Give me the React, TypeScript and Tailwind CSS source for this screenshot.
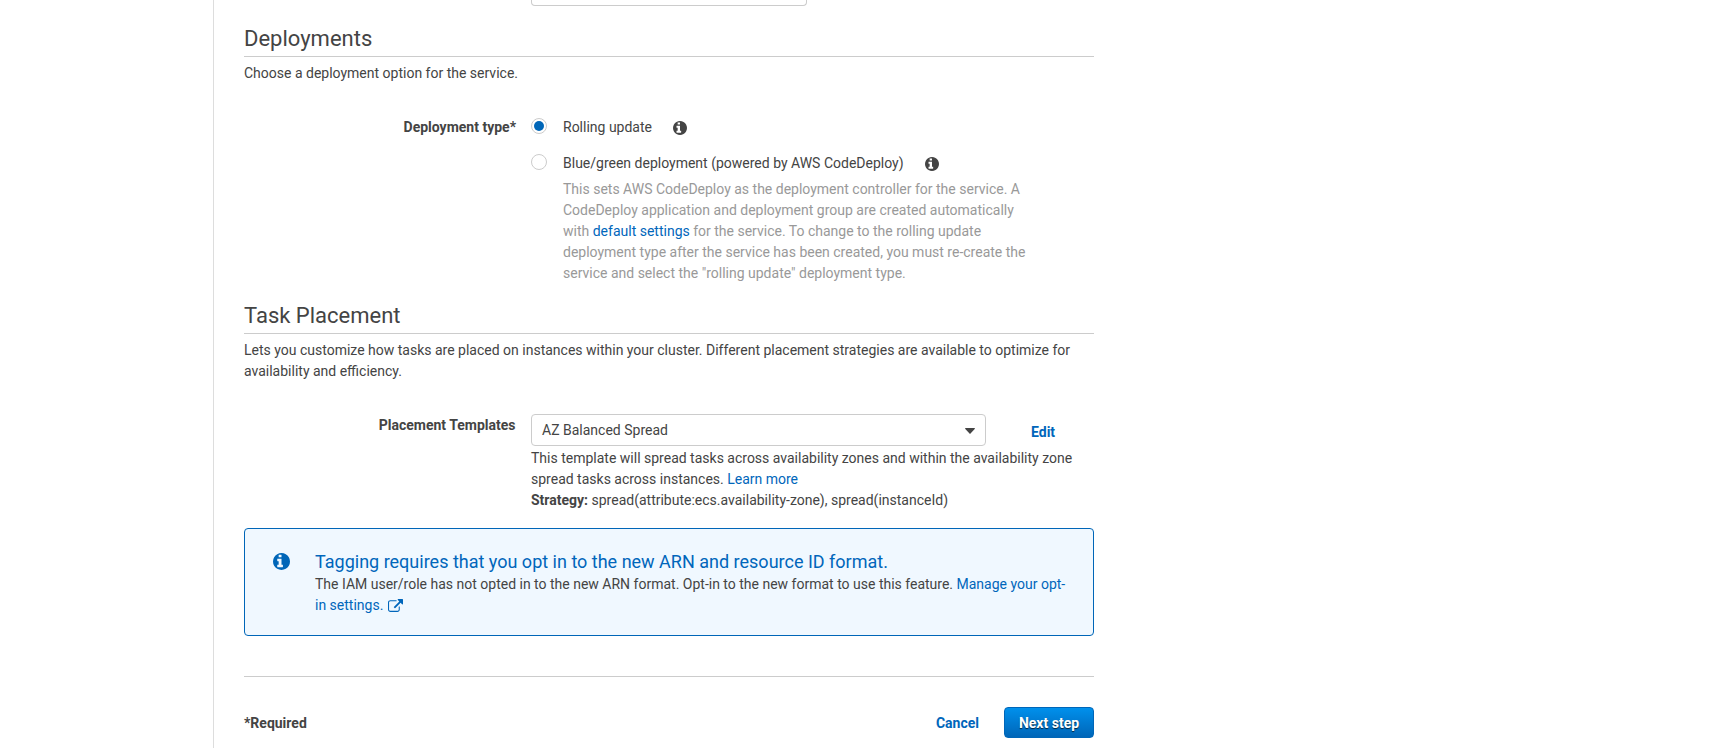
import React from "react";

const INFO =
  "M1024 1376v-160q0-14-9-23t-23-9h-96v-512q0-14-9-23t-23-9h-320q-14 0-23 9t-9 23v160q0 14 9 23t23 9h96v320h-96q-14 0-23 9t-9 23v160q0 14 9 23t23 9h448q14 0 23-9t9-23zM896 480v-160q0-14-9-23t-23-9h-192q-14 0-23 9t-9 23v160q0 14 9 23t23 9h192q14 0 23-9t9-23zM1664 896q0 209-103 385.5t-279.5 279.5-385.5 103-385.5-103-279.5-279.5-103-385.5 103-385.5 279.5-279.5 385.5-103 385.5 103 279.5 279.5 103 385.5z";
const EXTERNAL =
  "M1408 928v320q0 119-84.5 203.5t-203.5 84.5h-832q-119 0-203.5-84.5t-84.5-203.5v-832q0-119 84.5-203.5t203.5-84.5h704q14 0 23 9t9 23v64q0 14-9 23t-23 9h-704q-66 0-113 47t-47 113v832q0 66 47 113t113 47h832q66 0 113-47t47-113v-320q0-14 9-23t23-9h64q14 0 23 9t9 23zM1792 64v512q0 26-19 45t-45 19-45-19l-176-176-652 652q-10 10-23 10t-23-10l-114-114q-10-10-10-23t10-23l652-652-176-176q-19-19-19-45t19-45 45-19h512q26 0 45 19t19 45z";

function InfoIcon({ className }: { className: string }) {
  return (
    <svg viewBox="128 128 1536 1536" fill="currentColor" className={className}>
      <path d={INFO} />
    </svg>
  );
}

function Heading({ children }: { children: React.ReactNode }) {
  return (
    <h2 className="h-[33px] border-b border-[#ccc] text-[22px] leading-[30px] font-normal">{children}</h2>
  );
}

function Radio({ checked }: { checked?: boolean }) {
  return (
    <span className="mt-px flex size-4 shrink-0 items-center justify-center rounded-full border border-[#ccc] bg-white">
      {checked && <span className="size-[10px] rounded-full bg-[#0066b8]" />}
    </span>
  );
}

function Link({ children }: { children: React.ReactNode }) {
  return (
    <a href="#" className="text-[#0066bb]">
      {children}
    </a>
  );
}

export default function App() {
  return (
    <div className="flex h-[748px] overflow-hidden bg-white pl-[213px] font-[Roboto,sans-serif] text-[14px] leading-[21px] text-[#444]">
      <main className="w-[881px] border-l border-[#ddd] pl-[30px]">
        <div className="ml-[287px] h-[6px] w-[276px] rounded-b border border-t-0 border-[#ccc]" />

        <section className="mt-[18px]">
          <Heading>Deployments</Heading>
          <p className="mt-[6px]">Choose a deployment option for the service.</p>
          <div className="mt-[33px] flex">
            <div className="w-[272px] text-right font-bold">Deployment type*</div>
            <div className="ml-[15px] flex flex-col">
              <label className="flex h-[36px]">
                <Radio checked />
                <span className="ml-4">Rolling update</span>
                <InfoIcon className="mt-1 ml-[21px] size-[14px]" />
              </label>
              <label className="flex h-[26px]">
                <Radio />
                <span className="ml-4">Blue/green deployment (powered by AWS CodeDeploy)</span>
                <InfoIcon className="mt-1 ml-[21px] size-[14px]" />
              </label>
              <p className="ml-8 w-[472px] text-[#999]">
                This sets AWS CodeDeploy as the deployment controller for the service. A CodeDeploy application and
                deployment group are created automatically with <Link>default settings</Link> for the service. To
                change to the rolling update deployment type after the service has been created, you must re-create
                the service and select the "rolling update" deployment type.
              </p>
            </div>
          </div>
        </section>

        <section className="mt-[17px]">
          <Heading>Task Placement</Heading>
          <p className="mt-[6px]">
            Lets you customize how tasks are placed on instances within your cluster. Different placement strategies
            are available to optimize for availability and efficiency.
          </p>
          <div className="mt-8 flex">
            <div className="mt-px w-[272px] pr-[0.5px] text-right font-bold">Placement Templates</div>
            <div className="ml-[15px] flex-1">
              <div className="flex">
                <div className="flex h-8 w-[455px] items-start justify-between rounded border border-[#ccc] pt-[5px] pr-[10px] pl-[10px]">
                  <span>AZ Balanced Spread</span>
                  <svg viewBox="0 0 10 6" className="mt-[7.5px] h-[6px] w-[10px]" fill="#444">
                    <path d="M.5 0h9q.7.3.2.9L5.5 5.6q-.5.6-1 0L.3.9Q-.2.3.5 0z" />
                  </svg>
                </div>
                <a href="#" className="mt-2 ml-[45px] font-bold text-[#0066bb]">
                  Edit
                </a>
              </div>
              <p className="mt-[2px]">
                This template will spread tasks across availability zones and within the availability zone spread
                tasks across instances. <Link>Learn more</Link>
              </p>
              <p>
                <b className="font-bold">Strategy:</b> spread(attribute:ecs.availability-zone), spread(instanceId)
              </p>
            </div>
          </div>
        </section>

        <aside className="mt-[17px] flex h-[108px] rounded border border-[#0066b8] bg-[#f0f8ff] pt-[21px] pl-[27.5px]">
          <InfoIcon className="mt-[2.5px] size-[17px] shrink-0 text-[#0066b8]" />
          <div className="ml-[25.5px] w-[755px]">
            <h3 className="text-[18px] leading-[24px] font-normal text-[#0066bb]">
              Tagging requires that you opt in to the new ARN and resource ID format.
            </h3>
            <p>
              The IAM user/role has not opted in to the new ARN format. Opt-in to the new format to use this feature.{" "}
              <Link>
                Manage your opt-in settings.
                <svg
                  viewBox="0 0 1792 1536"
                  fill="currentColor"
                  className="ml-[4.5px] inline-block h-[13px] w-[15px] align-[-2px]"
                >
                  <path d={EXTERNAL} />
                </svg>
              </Link>
            </p>
          </div>
        </aside>

        <footer className="mt-10 flex border-t border-[#ccc] pt-[30px] font-bold">
          <span className="mt-[6px]">*Required</span>
          <a href="#" className="mt-[6px] ml-auto text-[#0066bb]">
            Cancel
          </a>
          <button className="ml-[25px] h-[31px] w-[90px] rounded border border-[#0066b8] bg-linear-to-b from-[#0090ec] to-[#0066b8] leading-[28px] font-bold text-white [text-shadow:0_1px_1px_rgba(0,0,0,0.7)]">
            Next step
          </button>
        </footer>
      </main>
    </div>
  );
}
